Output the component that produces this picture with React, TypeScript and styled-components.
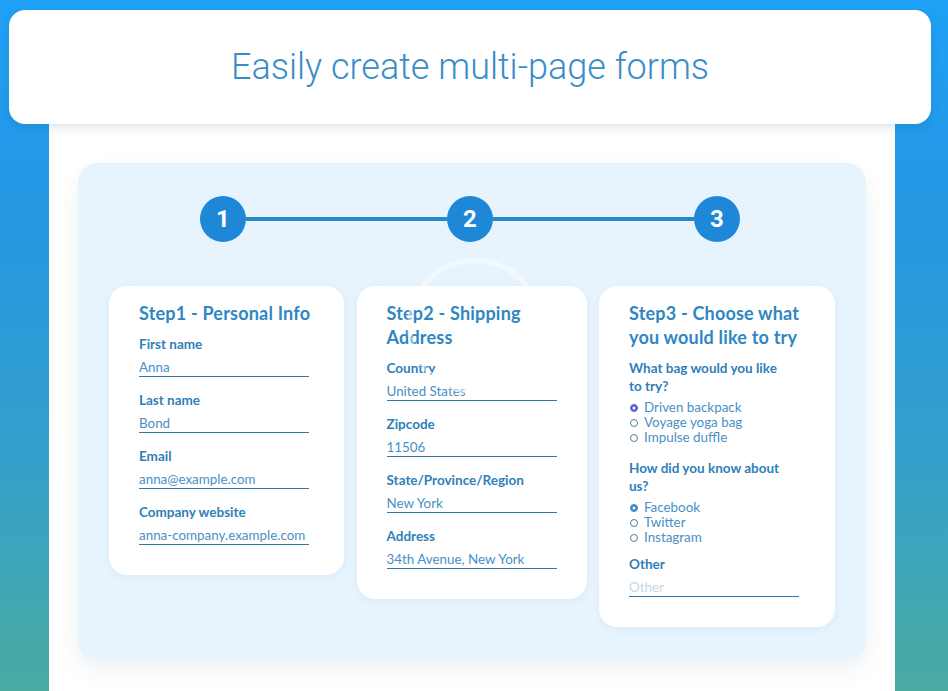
import React from "react";
import styled, { createGlobalStyle } from "styled-components";

const GlobalStyle = createGlobalStyle`
  body {
    margin: 0;
    font-family: "Lato", "Noto Sans", sans-serif;
  }
`;

type Radio = { label: string; checked?: boolean; tone?: string };

const bagOptions: Radio[] = [
  { label: "Driven backpack", checked: true, tone: "#4a55c2" },
  { label: "Voyage yoga bag" },
  { label: "Impulse duffle" },
];

const sourceOptions: Radio[] = [
  { label: "Facebook", checked: true, tone: "#2a7fc0" },
  { label: "Twitter" },
  { label: "Instagram" },
];

const App = () => {
  return (
    <>
      <GlobalStyle />
      <Page>
        <Header>
          <HeaderTitle>Easily create multi-page forms</HeaderTitle>
        </Header>
        <Panel>
          <FlowBox>
            <Steps>
              <StepDot>1</StepDot>
              <Connector />
              <StepDot>2</StepDot>
              <Connector />
              <StepDot>3</StepDot>
            </Steps>
            <Cards>
              <Card>
                <CardTitle>Step1 - Personal Info</CardTitle>
                <Fields>
                  <Field>
                    <Label>First name</Label>
                    <Value>Anna</Value>
                  </Field>
                  <Field>
                    <Label>Last name</Label>
                    <Value>Bond</Value>
                  </Field>
                  <Field>
                    <Label>Email</Label>
                    <Value>anna@example.com</Value>
                  </Field>
                  <Field>
                    <Label>Company website</Label>
                    <Value>anna-company.example.com</Value>
                  </Field>
                </Fields>
              </Card>

              <Card>
                <Ghost />
                <CardTitle>Step2 - Shipping Address</CardTitle>
                <Fields>
                  <Field>
                    <Label>Country</Label>
                    <Value>United States</Value>
                  </Field>
                  <Field>
                    <Label>Zipcode</Label>
                    <Value>11506</Value>
                  </Field>
                  <Field>
                    <Label>State/Province/Region</Label>
                    <Value>New York</Value>
                  </Field>
                  <Field>
                    <Label>Address</Label>
                    <Value>34th Avenue, New York</Value>
                  </Field>
                </Fields>
              </Card>

              <Card>
                <CardTitle>Step3 - Choose what you would like to try</CardTitle>
                <Fields>
                  <Field>
                    <Question>What bag would you like to try?</Question>
                    <RadioList>
                      {bagOptions.map((o) => (
                        <RadioRow key={o.label}>
                          <RadioMark $checked={o.checked} $tone={o.tone} />
                          {o.label}
                        </RadioRow>
                      ))}
                    </RadioList>
                  </Field>
                  <Field>
                    <Question>How did you know about us?</Question>
                    <RadioList>
                      {sourceOptions.map((o) => (
                        <RadioRow key={o.label}>
                          <RadioMark $checked={o.checked} $tone={o.tone} />
                          {o.label}
                        </RadioRow>
                      ))}
                    </RadioList>
                  </Field>
                  <Field $tight>
                    <Label>Other</Label>
                    <Value $placeholder>Other</Value>
                  </Field>
                </Fields>
              </Card>
            </Cards>
          </FlowBox>
        </Panel>
      </Page>
    </>
  );
};

export default App;

const Page = styled.div`
  min-height: 691px;
  box-sizing: border-box;
  padding-top: 10px;
  overflow: hidden;
  background: linear-gradient(
    180deg,
    #1fa1f6 0%,
    #2597e2 30%,
    #34a0cc 65%,
    #4aab9f 100%
  );
`;

const Header = styled.div`
  position: relative;
  z-index: 2;
  height: 114px;
  margin: 0 17px 0 9px;
  border-radius: 16px;
  background: #fff;
  box-shadow: 0 4px 10px rgba(20, 60, 100, 0.12);
  display: flex;
  align-items: center;
  justify-content: center;
`;

const HeaderTitle = styled.h1`
  margin: 0;
  font-family: "Roboto", sans-serif;
  font-weight: 300;
  font-size: 36px;
  color: #3a8dc8;
`;

const Panel = styled.div`
  margin: 0 53px 0 49px;
  padding: 39px 29px 40px;
  background: #fff;
`;

const FlowBox = styled.div`
  border-radius: 20px;
  background: #e7f4fe;
  box-shadow: 0 10px 22px rgba(40, 60, 90, 0.08);
  padding: 33px 31px 33px;
`;

const Steps = styled.div`
  display: flex;
  align-items: center;
  width: 540px;
  margin: 0 0 44px 91px;
`;

const StepDot = styled.div`
  width: 46px;
  height: 46px;
  border-radius: 50%;
  background: #1e87d8;
  color: #fff;
  font-family: "Roboto", sans-serif;
  font-weight: 700;
  font-size: 24px;
  display: flex;
  align-items: center;
  justify-content: center;
  flex-shrink: 0;
`;

const Connector = styled.div`
  flex: 1;
  height: 4px;
  background: #2a88c6;
`;

const Cards = styled.div`
  display: grid;
  grid-template-columns: 235px 230px 236px;
  justify-content: space-between;
  align-items: start;
`;

const Card = styled.div`
  position: relative;
  background: #fff;
  border-radius: 18px;
  padding: 15px 22px 30px 30px;
  box-shadow: 0 2px 8px rgba(60, 120, 170, 0.08);
`;

const Ghost = styled.div`
  position: absolute;
  left: 50px;
  top: -28px;
  width: 126px;
  height: 126px;
  border-radius: 50%;
  border: 5px solid rgba(255, 255, 255, 0.45);
  pointer-events: none;
`;

const CardTitle = styled.h2`
  margin: 0 0 10px;
  font-size: 18px;
  line-height: 24px;
  font-weight: 700;
  letter-spacing: 0.2px;
  color: #2f86c2;
`;

const Fields = styled.div`
  display: flex;
  flex-direction: column;
  gap: 14px;
`;

const Field = styled.div<{ $tight?: boolean }>`
  display: flex;
  flex-direction: column;
  gap: 5px;
  margin-top: ${(p) => (p.$tight ? "-4px" : "0")};
`;

const Label = styled.div`
  font-size: 13.5px;
  line-height: 18px;
  font-weight: 700;
  color: #2f80ba;
`;

const Question = styled(Label)`
  width: 160px;
`;

const Value = styled.div<{ $placeholder?: boolean }>`
  width: 170px;
  font-size: 13.4px;
  line-height: 18px;
  font-weight: 400;
  color: ${(p) => (p.$placeholder ? "#c3d8e6" : "#4a8fc4")};
  border-bottom: 1px solid #2c78ae;
  white-space: nowrap;
`;

const RadioList = styled.div`
  display: flex;
  flex-direction: column;
`;

const RadioRow = styled.div`
  display: flex;
  align-items: center;
  gap: 6px;
  padding-left: 1px;
  font-size: 13.4px;
  line-height: 15px;
  color: #4a8fc4;
`;

const RadioMark = styled.span<{ $checked?: boolean; $tone?: string }>`
  width: 6px;
  height: 6px;
  border-radius: 50%;
  border: 1.3px solid ${(p) => (p.$checked ? p.$tone : "#4d7f9e")};
  background: ${(p) => (p.$checked ? "#fff" : "transparent")};
  box-shadow: ${(p) => (p.$checked ? `inset 0 0 0 1.5px ${p.$tone}` : "none")};
  flex-shrink: 0;
`;
